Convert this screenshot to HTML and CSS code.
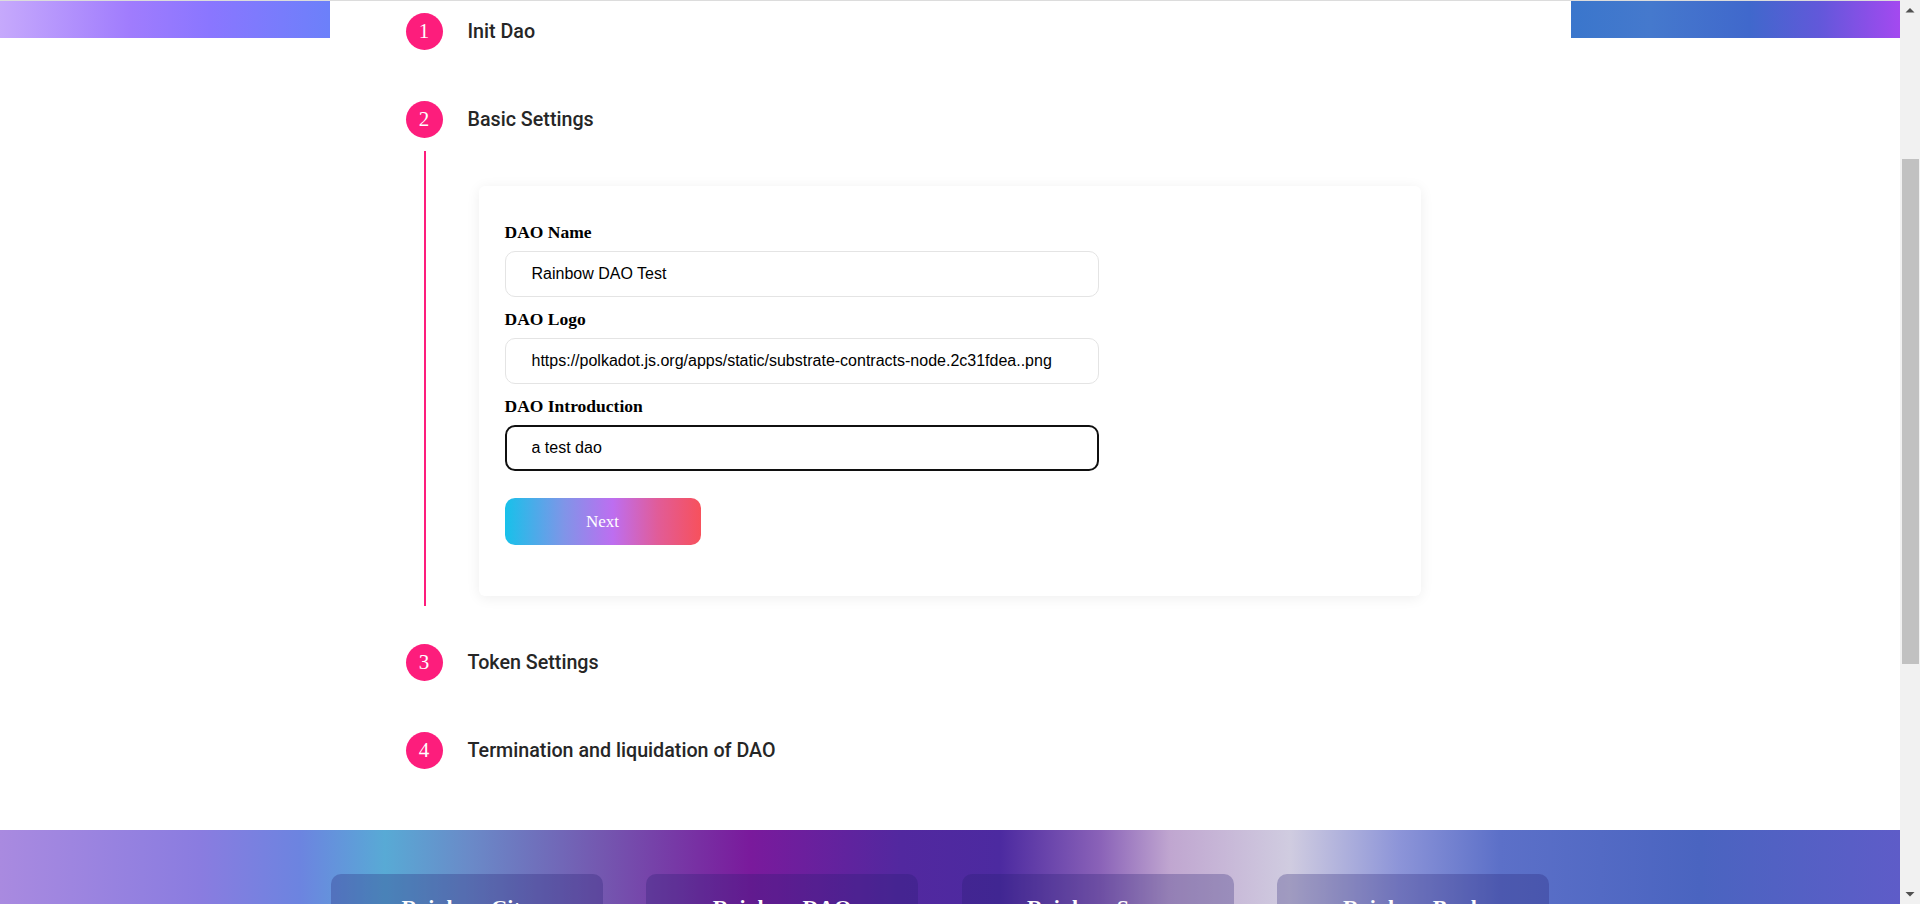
FILE: index.html
```html
<!DOCTYPE html>
<html lang="en">
<head>
<meta charset="utf-8">
<title>Create DAO</title>
<link rel="stylesheet" href="styles.css">
</head>
<body>
<header class="hero">
  <div class="hero-inner">
    <h1 class="hero-title">Create DAO</h1>
  </div>
</header>

<main class="panel">
  <ol class="steps">
    <li class="step">
      <div class="step-head"><span class="step-num">1</span><span class="step-title">Init Dao</span></div>
    </li>
    <li class="step step-active">
      <div class="step-head"><span class="step-num">2</span><span class="step-title">Basic Settings</span></div>
      <div class="step-body">
        <form class="card">
          <label class="field-label" for="dao-name">DAO Name</label>
          <input class="field-input" id="dao-name" type="text" value="Rainbow DAO Test">
          <label class="field-label" for="dao-logo">DAO Logo</label>
          <input class="field-input" id="dao-logo" type="text" value="https://polkadot.js.org/apps/static/substrate-contracts-node.2c31fdea..png">
          <label class="field-label" for="dao-intro">DAO Introduction</label>
          <input class="field-input is-focused" id="dao-intro" type="text" value="a test dao">
          <button class="btn-next" type="button">Next</button>
        </form>
      </div>
    </li>
    <li class="step">
      <div class="step-head"><span class="step-num">3</span><span class="step-title">Token Settings</span></div>
    </li>
    <li class="step">
      <div class="step-head"><span class="step-num">4</span><span class="step-title">Termination and liquidation of DAO</span></div>
    </li>
  </ol>
</main>

<footer class="footer">
  <div class="footer-cards">
    <div class="footer-card"><h3 class="footer-card-title">Rainbow City</h3></div>
    <div class="footer-card"><h3 class="footer-card-title">Rainbow DAO</h3></div>
    <div class="footer-card"><h3 class="footer-card-title">Rainbow Swap</h3></div>
    <div class="footer-card"><h3 class="footer-card-title">Rainbow Bank</h3></div>
  </div>
</footer>

<div class="scrollbar" aria-hidden="true">
  <div class="scrollbar-btn">
    <svg width="20" height="20" viewBox="0 0 20 20"><path d="M5.5 12.5h9L10 8z" fill="#505050"/></svg>
  </div>
  <div class="scrollbar-track"><div class="scrollbar-thumb"></div></div>
  <div class="scrollbar-btn">
    <svg width="20" height="20" viewBox="0 0 20 20"><path d="M5.5 8h9L10 12.5z" fill="#505050"/></svg>
  </div>
</div>
<script src="scroll.js"></script>
</body>
</html>
```

FILE: styles.css
```css
html {
  background: #ffffff;
}

body {
  margin: 0 20px 0 0;
  background: #ffffff;
  font-family: "Liberation Serif", "Times New Roman", serif;
  color: #000;
}

/* window scrollbar (drawn, since the capture hides native ones) */
.scrollbar {
  position: fixed;
  top: 0;
  right: 0;
  width: 20px;
  height: 100vh;
  background: #f1f1f1;
  display: flex;
  flex-direction: column;
  z-index: 10;
}

.scrollbar-btn {
  height: 20px;
  flex: none;
}

.scrollbar-btn svg {
  display: block;
}

.scrollbar-track {
  flex: 1;
  padding-top: 139px;
}

.scrollbar-thumb {
  height: 505px;
  margin: 0 1px 0 2px;
  background: #c1c1c1;
}

.hero {
  height: 292px;
  background:
    linear-gradient(#dcdcdc, #dcdcdc) 0 254px / 100% 1px no-repeat,
    linear-gradient(90deg,
      #c6a9fc 0px, #a07cfd 130px, #8a76ff 210px, #6c80fa 329px,
      #4f7ae0 900px, #3a76cc 1570px, #4579cd 1650px, #4068cc 1750px,
      #6258da 1820px, #a449f0 1900px);
}

.hero-inner {
  width: 1241px;
  margin: 0 auto;
  padding-top: 90px;
}

.hero-title {
  margin: 0;
  color: #ffffff;
  font-family: Roboto, "Liberation Sans", sans-serif;
  font-size: 40px;
  font-weight: 500;
}

.panel {
  position: relative;
  width: 1241px;
  margin: -37px auto 0;
  background: #ffffff;
  box-sizing: border-box;
  padding: 12px 0 61px 76px;
}

.steps {
  list-style: none;
  margin: 0;
  padding: 0;
}

.step + .step {
  margin-top: 51px;
}

.step-active + .step {
  margin-top: 38px;
}

.step-head {
  display: flex;
  align-items: center;
  gap: 25px;
  height: 37px;
}

.step-num {
  width: 37px;
  height: 37px;
  flex: none;
  border-radius: 50%;
  background: #fd1d7c;
  color: #ffffff;
  font-family: "Liberation Serif", "Times New Roman", serif;
  font-size: 21px;
  line-height: 37px;
  text-align: center;
}

.step-title {
  font-family: Roboto, "Liberation Sans", sans-serif;
  font-size: 19.7px;
  font-weight: 500;
  color: #262626;
}

.step-body {
  margin: 13px 0 0 18px;
  border-left: 2px solid #fd1d7c;
  padding: 35px 0 10px 53px;
}

.card {
  width: 942px;
  box-sizing: border-box;
  padding: 37px 26px 51px;
  background: #ffffff;
  border-radius: 6px;
  box-shadow: 0 2px 14px rgba(0, 0, 0, 0.07);
  display: flex;
  flex-direction: column;
  align-items: flex-start;
}

.field-label {
  display: block;
  font-family: "Liberation Serif", "Times New Roman", serif;
  font-size: 17.5px;
  font-weight: 700;
  line-height: 18px;
  margin: 13px 0 10px;
  color: #000;
}

.field-label:first-child {
  margin-top: 0;
}

.field-input {
  display: block;
  width: 594px;
  height: 46px;
  box-sizing: border-box;
  margin: 0;
  padding: 0 20px 0 26px;
  border: 1px solid #e4e4e4;
  border-radius: 10px;
  background: #ffffff;
  font-family: "Liberation Sans", Arial, sans-serif;
  font-size: 16px;
  color: #000;
  outline: none;
}

.field-input.is-focused {
  border: 2px solid #101010;
  padding-left: 25px;
}

.btn-next {
  margin-top: 27px;
  width: 196px;
  height: 47px;
  border: 0;
  border-radius: 10px;
  background: linear-gradient(90deg, #17c1ea 0%, #7f95e8 30%, #bd6ef0 55%, #e15c98 78%, #f7515c 100%);
  color: #ffffff;
  font-family: "Liberation Serif", "Times New Roman", serif;
  font-size: 17px;
  cursor: pointer;
}

.footer {
  height: 473px;
  box-sizing: border-box;
  padding-top: 44px;
  background: linear-gradient(90deg,
    #a98ae0 0px, #8a7ce0 200px, #6c84e0 300px, #58aad5 385px,
    #6a8ac8 470px, #7458b0 600px, #7a1a9c 750px, #52289f 900px,
    #4c2aa0 1000px, #8a62b8 1100px, #c0a6d0 1170px, #d0cce0 1290px,
    #8c94d8 1400px, #5c70c8 1500px, #4a64c0 1700px, #5e5cc8 1900px);
}

.footer-cards {
  width: 1241px;
  margin: 0 auto;
  padding-left: 1px;
  box-sizing: border-box;
  display: flex;
  gap: 43.5px;
}

.footer-card {
  width: 272px;
  height: 360px;
  box-sizing: border-box;
  padding-top: 21px;
  border-radius: 10px;
  background: rgba(36, 28, 110, 0.28);
  text-align: center;
}

.footer-card-title {
  margin: 0;
  font-family: "Liberation Serif", "Times New Roman", serif;
  font-size: 22px;
  font-weight: 700;
  color: #ffffff;
}
```

FILE: scroll.js
```js
if ('scrollRestoration' in history) {
  history.scrollRestoration = 'manual';
}
window.scrollTo(0, 254);
window.addEventListener('load', function () {
  window.scrollTo(0, 254);
});
```
